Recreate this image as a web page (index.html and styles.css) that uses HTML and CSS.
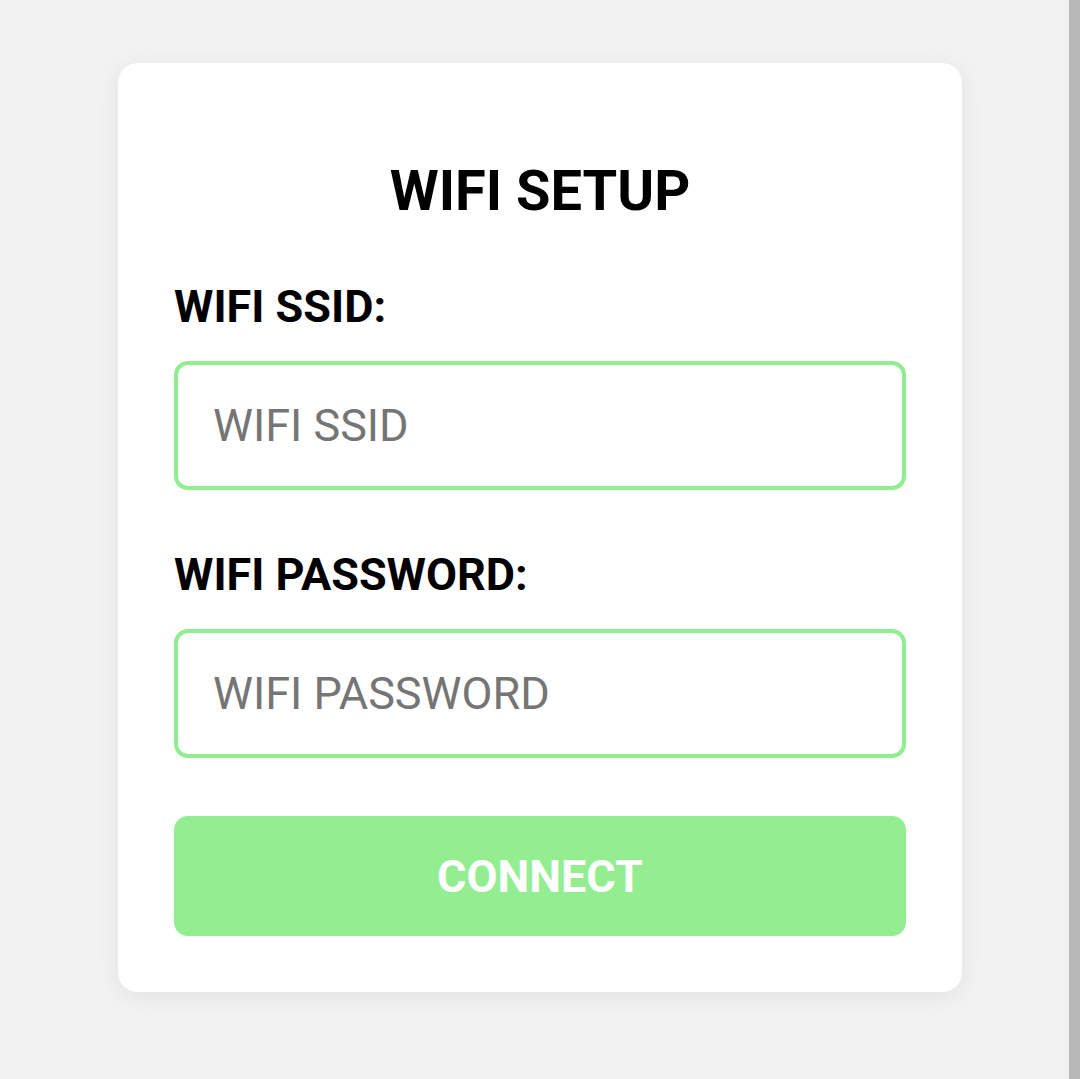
FILE: index.html
```html
<!DOCTYPE html>
<html lang="en">
<head>
<meta charset="utf-8">
<title>WIFI SETUP</title>
<link rel="stylesheet" href="styles.css">
</head>
<body>
<main class="page">
  <form class="card">
    <h1 class="title">WIFI SETUP</h1>
    <label class="label" for="ssid">WIFI SSID:</label>
    <input class="field" id="ssid" type="text" placeholder="WIFI SSID">
    <label class="label label-second" for="pass">WIFI PASSWORD:</label>
    <input class="field" id="pass" type="password" placeholder="WIFI PASSWORD">
    <button class="button" type="button">CONNECT</button>
  </form>
</main>
<div class="scrollbar"></div>
</body>
</html>
```
FILE: styles.css
```css
html, body {
  margin: 0;
  height: 100%;
}
body {
  display: flex;
  background: #f2f2f2;
  font-family: Roboto, "Liberation Sans", sans-serif;
  overflow: hidden;
}
.page {
  flex: 1;
  padding: 63px 0 0 118px;
}
.scrollbar {
  width: 11px;
  background: #b8b8b8;
}
.card {
  box-sizing: border-box;
  width: 844px;
  background: #fff;
  border-radius: 20px;
  box-shadow: 0 4px 24px rgba(0, 0, 0, 0.07);
  padding: 95px 56px 56px;
  display: flex;
  flex-direction: column;
}
.title {
  margin: 0 0 58px;
  font-size: 56px;
  line-height: 66px;
  font-weight: 700;
  text-align: center;
  color: #000;
}
.label {
  font-size: 45px;
  line-height: 50px;
  font-weight: 700;
  color: #000;
  margin-bottom: 29px;
}
.label-second {
  margin-top: 60px;
}
.field {
  box-sizing: border-box;
  height: 129px;
  width: 100%;
  border: 4px solid #90ee90;
  border-radius: 14px;
  padding: 0 35px;
  font-family: inherit;
  font-size: 45px;
  color: #333;
  background: #fff;
  outline: none;
}
.field::placeholder {
  color: #757575;
}
.button {
  margin-top: 58px;
  height: 120px;
  border: none;
  border-radius: 14px;
  background: #93ee91;
  color: #fff;
  font-family: inherit;
  font-size: 45px;
  font-weight: 700;
}
```
